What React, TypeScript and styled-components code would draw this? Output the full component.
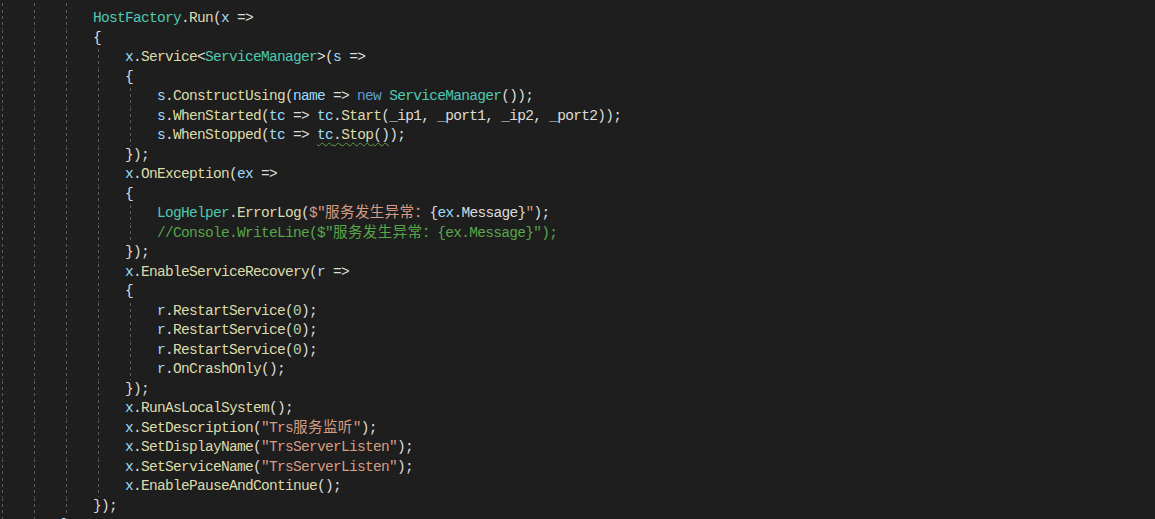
import React from "react";
import styled, { createGlobalStyle } from "styled-components";

const GlobalStyle = createGlobalStyle`
  html, body {
    margin: 0;
    padding: 0;
    background: #1e1e1e;
    overflow: hidden;
  }
`;

type Kind = "p" | "v" | "m" | "t" | "k" | "s" | "c" | "n";

const palette: Record<Kind, string> = {
  p: "#dcdcdc",
  v: "#9cdcfe",
  m: "#dcdcaa",
  t: "#4ec9b0",
  k: "#569cd6",
  s: "#d69d85",
  c: "#57a64a",
  n: "#b5cea8",
};

type Tok = { k: Kind; t: string; w?: boolean };
type Line = { col: number; toks: Tok[] };

const Editor = styled.div`
  width: 100vw;
  height: 519px;
  overflow: hidden;
  background: #1e1e1e;
  font-family: "Liberation Mono", "DejaVu Sans Mono", monospace;
  font-size: 14.5px;
  letter-spacing: -0.7px;
  color: #dcdcdc;
`;

const Lines = styled.div`
  display: flex;
  flex-direction: column;
  margin-top: -10.5px;
  margin-left: -3px;
`;

const Row = styled.div`
  display: flex;
  align-items: stretch;
  height: 19.5px;
  line-height: 19.5px;
  white-space: pre;
`;

const Guide = styled.span`
  flex: none;
  width: 32px;
  background-image: linear-gradient(to bottom, #5a5a5a 50%, transparent 50%);
  background-size: 1px 6px;
  background-repeat: repeat-y;
  background-position: 5px 1px;
`;

const Code = styled.span`
  flex: none;
`;

const Token = styled.span<{ $kind: Kind; $wavy?: boolean }>`
  color: ${(p) => palette[p.$kind]};
  text-decoration: ${(p) => (p.$wavy ? "underline wavy #5f9e42" : "none")};
  text-decoration-thickness: 1px;
  text-underline-offset: 3px;
`;

const Cjk = styled.span`
  font-family: "Noto Sans CJK SC", sans-serif;
  font-size: 14.5px;
  line-height: 1;
  letter-spacing: 0.4px;
`;

const T = (k: Kind, t: string, w?: boolean): Tok => ({ k, t, w });
const L = (col: number, ...toks: Tok[]): Line => ({ col, toks });

const lines: Line[] = [
  L(12),
  L(12, T("t", "HostFactory"), T("p", "."), T("m", "Run"), T("p", "("), T("v", "x"), T("p", " =>")),
  L(12, T("p", "{")),
  L(16, T("v", "x"), T("p", "."), T("m", "Service"), T("p", "<"), T("t", "ServiceManager"), T("p", ">("), T("v", "s"), T("p", " =>")),
  L(16, T("p", "{")),
  L(20, T("v", "s"), T("p", "."), T("m", "ConstructUsing"), T("p", "("), T("v", "name"), T("p", " => "), T("k", "new"), T("p", " "), T("t", "ServiceManager"), T("p", "());")),
  L(20, T("v", "s"), T("p", "."), T("m", "WhenStarted"), T("p", "("), T("v", "tc"), T("p", " => "), T("v", "tc"), T("p", "."), T("m", "Start"), T("p", "(_ip1, _port1, _ip2, _port2));")),
  L(20, T("v", "s"), T("p", "."), T("m", "WhenStopped"), T("p", "("), T("v", "tc"), T("p", " => "), T("v", "tc", true), T("p", ".", true), T("m", "Stop", true), T("p", "()", true), T("p", ");")),
  L(16, T("p", "});")),
  L(16, T("v", "x"), T("p", "."), T("m", "OnException"), T("p", "("), T("v", "ex"), T("p", " =>")),
  L(16, T("p", "{")),
  L(20, T("t", "LogHelper"), T("p", "."), T("m", "ErrorLog"), T("p", "("), T("s", "$\"服务发生异常："), T("p", "{"), T("v", "ex"), T("p", ".Message}"), T("s", "\""), T("p", ");")),
  L(20, T("c", "//Console.WriteLine($\"服务发生异常：{ex.Message}\");")),
  L(16, T("p", "});")),
  L(16, T("v", "x"), T("p", "."), T("m", "EnableServiceRecovery"), T("p", "("), T("v", "r"), T("p", " =>")),
  L(16, T("p", "{")),
  L(20, T("v", "r"), T("p", "."), T("m", "RestartService"), T("p", "("), T("n", "0"), T("p", ");")),
  L(20, T("v", "r"), T("p", "."), T("m", "RestartService"), T("p", "("), T("n", "0"), T("p", ");")),
  L(20, T("v", "r"), T("p", "."), T("m", "RestartService"), T("p", "("), T("n", "0"), T("p", ");")),
  L(20, T("v", "r"), T("p", "."), T("m", "OnCrashOnly"), T("p", "();")),
  L(16, T("p", "});")),
  L(16, T("v", "x"), T("p", "."), T("m", "RunAsLocalSystem"), T("p", "();")),
  L(16, T("v", "x"), T("p", "."), T("m", "SetDescription"), T("p", "("), T("s", "\"Trs服务监听\""), T("p", ");")),
  L(16, T("v", "x"), T("p", "."), T("m", "SetDisplayName"), T("p", "("), T("s", "\"TrsServerListen\""), T("p", ");")),
  L(16, T("v", "x"), T("p", "."), T("m", "SetServiceName"), T("p", "("), T("s", "\"TrsServerListen\""), T("p", ");")),
  L(16, T("v", "x"), T("p", "."), T("m", "EnablePauseAndContinue"), T("p", "();")),
  L(12, T("p", "});")),
  L(8, T("p", "}")),
];

const CJK_RE = /([\u3000-\u9fff\uff00-\uffef]+)/;

function renderText(text: string) {
  return text.split(CJK_RE).map((part, i) =>
    CJK_RE.test(part) ? <Cjk key={i}>{part}</Cjk> : <React.Fragment key={i}>{part}</React.Fragment>
  );
}

export default function App() {
  return (
    <>
      <GlobalStyle />
      <Editor>
        <Lines>
          {lines.map((line, i) => (
            <Row key={i}>
              {Array.from({ length: line.col / 4 }).map((_, g) => (
                <Guide key={g} />
              ))}
              <Code>
                {line.toks.map((tok, j) => (
                  <Token key={j} $kind={tok.k} $wavy={tok.w}>
                    {renderText(tok.t)}
                  </Token>
                ))}
              </Code>
            </Row>
          ))}
        </Lines>
      </Editor>
    </>
  );
}
